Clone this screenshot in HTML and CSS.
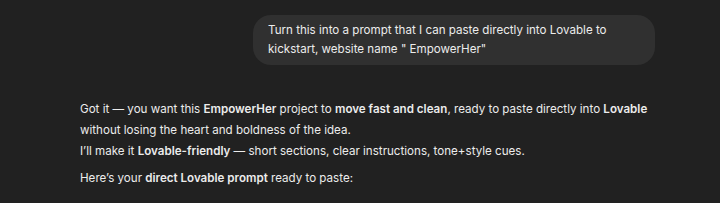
FILE: index.html
```html
<!DOCTYPE html>
<html>
<head>
<meta charset="utf-8">
<link rel="stylesheet" href="styles.css">
</head>
<body>
<div class="thread">
  <div class="user-row">
    <div class="bubble">Turn this into a prompt that I can paste directly into Lovable to kickstart, website name " EmpowerHer"</div>
  </div>
  <div class="assistant">
    <p>Got it — you want this <b>EmpowerHer</b> project to <b>move fast and clean</b>, ready to paste directly into <b>Lovable</b> without losing the heart and boldness of the idea.<br>I’ll make it <b>Lovable-friendly</b> — short sections, clear instructions, tone+style cues.</p>
    <p>Here’s your <b>direct Lovable prompt</b> ready to paste:</p>
  </div>
</div>
</body>
</html>
```
FILE: styles.css
```css
html, body {
  margin: 0;
  padding: 0;
  background: #212121;
}
body {
  font-family: Inter, "Noto Sans", sans-serif;
  color: #ececec;
  font-size: 11.6px;
}
.thread {
  width: 575px;
  margin-left: 80px;
  padding-top: 15px;
}
.user-row {
  display: flex;
  justify-content: flex-end;
}
.bubble {
  background: #303030;
  border-radius: 18px;
  padding: 6px 15px;
  width: 372px;
  line-height: 19px;
}
.assistant {
  margin-top: 34px;
  line-height: 21px;
}
.assistant p {
  margin: 0 0 6px 0;
}
.assistant b {
  font-weight: 600;
}
```
